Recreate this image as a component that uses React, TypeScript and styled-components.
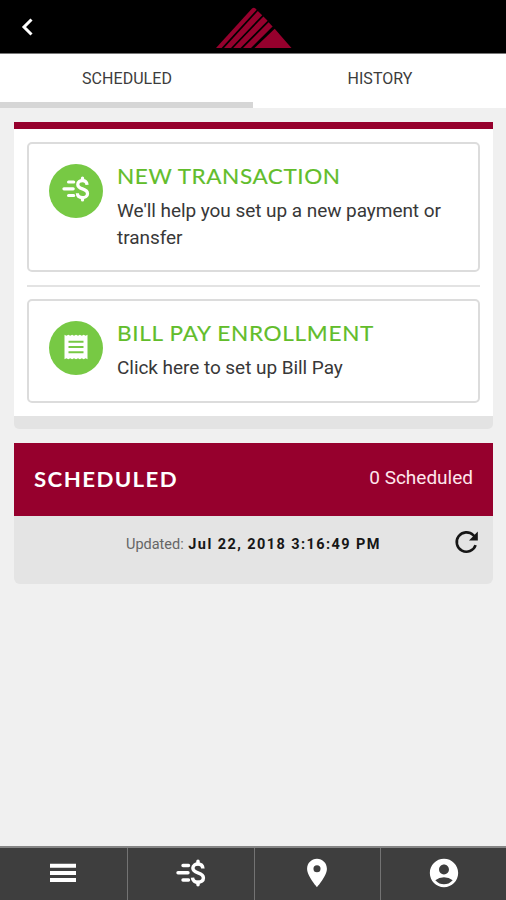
import React from "react";
import styled, { createGlobalStyle } from "styled-components";
import { MdPlace, MdAccountCircle } from "react-icons/md";

const CRIMSON = "#96002d";

const GlobalStyle = createGlobalStyle`
  * { box-sizing: border-box; }
  body { margin: 0; background: #f0f0f0; font-family: Roboto, "Liberation Sans", sans-serif; }
`;

const Screen = styled.div`
  height: 900px;
  display: flex;
  flex-direction: column;
  background: #f0f0f0;
`;

const Header = styled.header`
  height: 54px;
  flex: none;
  display: grid;
  grid-template-columns: 60px 1fr 60px;
  background: #000;
  border-bottom: 1px solid #777;
`;

const BackButton = styled.button`
  display: flex;
  padding: 18px 0 0 21px;
  border: 0;
  background: none;
`;

const Brand = styled.div`
  display: flex;
  justify-content: center;
  padding: 7px 0 0 2px;
`;

const Tabs = styled.nav`
  display: grid;
  grid-template-columns: 1fr 1fr;
  height: 54px;
  flex: none;
  background: #fff;
`;

const Tab = styled.button<{ $active?: boolean }>`
  border: 0;
  border-bottom: 6px solid ${(p) => (p.$active ? "#d6d6d6" : "#fff")};
  padding: 2px 0 0 1px;
  background: none;
  font: 400 16px/46px Roboto, sans-serif;
  letter-spacing: 0.05px;
  color: #3c3c3c;
`;

const Content = styled.main`
  flex: 1;
  padding: 14px 13px 0 14px;
`;

const ActionPanel = styled.section`
  padding: 13px 13px 13px;
  background: #fff;
  border-top: 7px solid ${CRIMSON};
`;

const PanelFoot = styled.div`
  height: 13px;
  margin-bottom: 14px;
  background: #e3e3e3;
  border-radius: 0 0 5px 5px;
`;

const ActionCard = styled.button<{ $height: number }>`
  display: flex;
  width: 100%;
  height: ${(p) => p.$height}px;
  padding: 20px 20px 0 20px;
  gap: 14px;
  border: 2px solid #dcdcdc;
  border-radius: 5px;
  background: #fff;
  text-align: left;
`;

const Divider = styled.hr`
  height: 2px;
  margin: 13px 0 12px;
  border: 0;
  background: #e3e3e3;
`;

const Disc = styled.span<{ $lift: number }>`
  display: grid;
  place-items: center;
  flex: none;
  width: 54px;
  height: 54px;
  padding-bottom: ${(p) => p.$lift}px;
  border-radius: 50%;
  background: #77c944;
  color: #fff;
`;

const ActionText = styled.span`
  display: block;
`;

const ActionTitle = styled.span<{ $spacing: string }>`
  display: block;
  font: 400 20.5px/24px Lato, sans-serif;
  letter-spacing: ${(p) => p.$spacing};
  -webkit-text-stroke: 0.15px;
  transform: scaleX(1.1);
  transform-origin: left;
  color: #62bd2b;
  white-space: nowrap;
`;

const ActionNote = styled.span`
  display: block;
  margin-top: 9px;
  font: 400 19px/27px Roboto, sans-serif;
  letter-spacing: -0.05px;
  color: #383838;
`;

const SummaryHead = styled.div`
  display: flex;
  justify-content: space-between;
  height: 73px;
  padding: 0 20px 0 20px;
  background: ${CRIMSON};
  color: #fff;
`;

const SummaryTitle = styled.h2`
  margin: 0;
  font: 700 21px/72px Lato, sans-serif;
  letter-spacing: 1.3px;
  transform: scaleX(1.06);
  transform-origin: left;
`;

const SummaryCount = styled.span`
  font: 400 19px/69px Roboto, sans-serif;
  color: #ffe6ec;
`;

const SummaryFoot = styled.div`
  display: grid;
  grid-template-columns: 1fr 27px;
  height: 68px;
  padding: 10px 13px 0 112px;
  background: #e4e4e4;
  border-radius: 0 0 6px 6px;

  svg {
    margin-top: 3px;
  }
`;

const Updated = styled.span`
  font: 400 14.5px/38px Roboto, sans-serif;
  color: #666;
  white-space: nowrap;
`;

const Stamp = styled.strong`
  margin-left: 1px;
  font-weight: 700;
  letter-spacing: 1.43px;
  color: #161616;
`;

const BottomNav = styled.nav`
  display: grid;
  grid-template-columns: 128px 127px 126px 1fr;
  height: 54px;
  flex: none;
  border-top: 2px solid #858585;
  background: #3e3e3e;
`;

const NavItem = styled.button`
  display: grid;
  place-items: center;
  padding: 0 1px 2px 0;
  border: 0;
  border-right: 1px solid #737373;
  background: none;
  color: #fff;
  &:last-child { border-right: 0; padding: 0 0 2px 1px; }
`;

const CashIcon = ({ width, height }: { width: number; height: number }) => (
  <svg width={width} height={height} viewBox="0 0 30 28" fill="none" stroke="currentColor" strokeLinecap="round">
    <path d="M7 6.5h5.5M2 13.8h10M7 21h5.5" strokeWidth="3.4" />
    <path d="M26.9 9.5C26.7 6.6 24.7 4.9 22 4.9S16.9 6.5 16.9 9.1C16.9 12 19.2 13 22 13.9S27.4 16 27.4 19C27.4 21.7 25 23.2 22 23.2S16.6 21.6 16.5 18.6" strokeWidth="3.5" strokeLinecap="butt" />
    <path d="M22 2.2v2.6M22 23.2v2.6" strokeWidth="3.5" />
  </svg>
);

const ReceiptIcon = () => (
  <svg width="24" height="26" viewBox="0 0 24 26" fill="currentColor">
    <path
      fillRule="evenodd"
      d="M0.5 0.7L2.4 1.8L4.3 0.7L6.2 1.8L8.1 0.7L10 1.8L12 0.7L14 1.8L15.9 0.7L17.8 1.8L19.7 0.7L21.6 1.8L23.5 0.7V25.3L21.6 24.2L19.7 25.3L17.8 24.2L15.9 25.3L14 24.2L12 25.3L10 24.2L8.1 25.3L6.2 24.2L4.3 25.3L2.4 24.2L0.5 25.3zM4.5 6.7v2h15v-2zM4.5 12v2h15v-2zM4.5 17.3v2h15v-2z"
    />
  </svg>
);

const RefreshIcon = () => (
  <svg width="27" height="27" viewBox="0 0 27 27">
    <path d="M22.6 16.2A9.7 9.7 0 1 1 20.3 6.2L22 8" fill="none" stroke="#161616" strokeWidth="2.6" />
    <path d="M24.8 2.6V11.4H16z" fill="#161616" />
  </svg>
);

const BarsIcon = () => (
  <svg width="26" height="20" viewBox="0 0 26 20" fill="currentColor">
    <path d="M0 0.8h26v4H0zM0 8h26v4H0zM0 14.9h26v4H0z" />
  </svg>
);

const Logo = () => (
  <svg width="76" height="41" viewBox="0 0 76 41" fill={CRIMSON}>
    <path d="M0 41L36 1.6Q37.7 0 39.4 1.4L40.7 2.7L5.6 41z" />
    <path d="M8 41L41.8 4L46.2 8.2L15 41z" />
    <path d="M17.2 41L47.4 9.4L51.6 13.8L24.5 41z" />
    <path d="M27 41L52.6 15.2L56.6 19.6L35 41z" />
    <path d="M38.5 41L58.7 21.8L75.5 41z" />
  </svg>
);

export default function App() {
  return (
    <Screen>
      <GlobalStyle />
      <Header>
        <BackButton aria-label="Back">
          <svg width="12" height="18" viewBox="0 0 12 18" fill="none" stroke="#fff" strokeWidth="3">
            <path d="M10.5 1.5L3 9l7.5 7.5" />
          </svg>
        </BackButton>
        <Brand><Logo /></Brand>
      </Header>
      <Tabs>
        <Tab $active>SCHEDULED</Tab>
        <Tab>HISTORY</Tab>
      </Tabs>
      <Content>
        <ActionPanel>
          <ActionCard $height={130}>
            <Disc $lift={4}><CashIcon width={28} height={26} /></Disc>
            <ActionText>
              <ActionTitle $spacing="0.52px">NEW TRANSACTION</ActionTitle>
              <ActionNote>We'll help you set up a new payment or transfer</ActionNote>
            </ActionText>
          </ActionCard>
          <Divider />
          <ActionCard $height={104}>
            <Disc $lift={3}><ReceiptIcon /></Disc>
            <ActionText>
              <ActionTitle $spacing="0.62px">BILL PAY ENROLLMENT</ActionTitle>
              <ActionNote>Click here to set up Bill Pay</ActionNote>
            </ActionText>
          </ActionCard>
        </ActionPanel>
        <PanelFoot />
        <SummaryHead>
          <SummaryTitle>SCHEDULED</SummaryTitle>
          <SummaryCount>0 Scheduled</SummaryCount>
        </SummaryHead>
        <SummaryFoot>
          <Updated>Updated: <Stamp>Jul 22, 2018 3:16:49 PM</Stamp></Updated>
          <RefreshIcon />
        </SummaryFoot>
      </Content>
      <BottomNav>
        <NavItem aria-label="Menu"><BarsIcon /></NavItem>
        <NavItem aria-label="Payments"><CashIcon width={30} height={28} /></NavItem>
        <NavItem aria-label="Locations"><MdPlace size={34} /></NavItem>
        <NavItem aria-label="Account"><MdAccountCircle size={34} /></NavItem>
      </BottomNav>
    </Screen>
  );
}
